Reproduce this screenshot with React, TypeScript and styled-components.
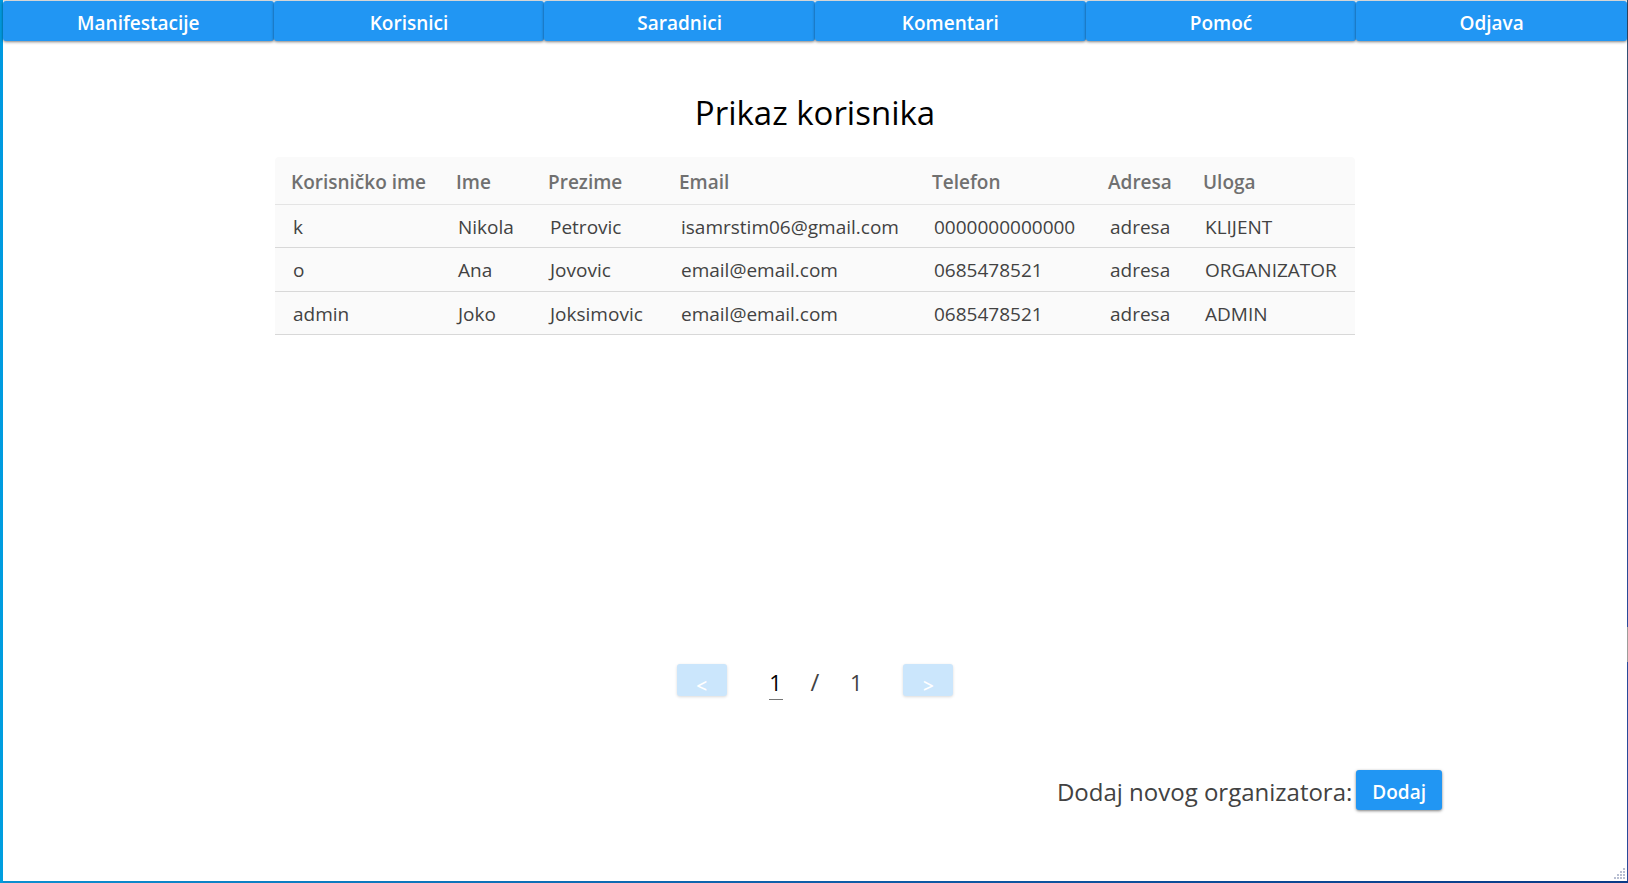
import React from "react";
import styled, { createGlobalStyle } from "styled-components";

const GlobalStyle = createGlobalStyle`
  *, *::before, *::after { box-sizing: border-box; }
  body { margin: 0; }
  body, button, input {
    font-family: "Segoe UI", "Open Sans", "Noto Sans", sans-serif;
  }
`;

const Desktop = styled.div`
  display: flex;
  min-height: 100vh;
  padding: 0 1px 2px 3px;
  background:
    linear-gradient(#0099e0, #009edf) left / 3px 100% no-repeat,
    linear-gradient(90deg, #0b8fd0, #0e5ea8 50%, #0a3a86) bottom / 100% 2px no-repeat,
    linear-gradient(#33506f 0, #2a4a9a 71%, #9c9c9c 71%, #9c9c9c 75%, #2a4a9a 75%) right / 1px 100% no-repeat;
`;

const Window = styled.div`
  position: relative;
  display: flex;
  flex: 1;
  flex-direction: column;
  min-width: 0;
  border-top: 1px solid #e6e6e6;
  background: #fff;
  color: #424242;
`;

const Nav = styled.nav`
  display: grid;
  grid-template-columns: repeat(6, 1fr);
`;

const RaisedButton = styled.button`
  height: 40px;
  padding: 4px 16px 0;
  border: 0;
  border-radius: 3px;
  background: #2196f3;
  box-shadow: 0 1px 3px rgba(0, 0, 0, 0.5);
  color: #fff;
  font-size: 19px;
  font-weight: 600;
  line-height: 24px;
`;

const PageButton = styled(RaisedButton)`
  width: 50px;
  height: 32px;
  padding: 12px 0 0;
  background: #cbe6fc;
  box-shadow: 0 1px 3px rgba(0, 0, 0, 0.15);
  line-height: 20px;
`;

const Main = styled.main`
  display: flex;
  flex: 1;
  flex-direction: column;
  align-items: center;
  padding-top: 48px;
`;

const Title = styled.h1`
  margin: 0;
  color: #000;
  font-size: 33px;
  font-weight: 400;
  line-height: 48px;
`;

const TableArea = styled.section`
  flex: 0 0 auto;
  min-height: 527px;
  padding-top: 20px;
`;

const Table = styled.table`
  width: 1080px;
  height: 178px;
  table-layout: fixed;
  border-collapse: separate;
  border-spacing: 0;
  border-radius: 4px 4px 0 0;
  background: #fafafa;
  font-size: 19px;
  line-height: 24px;
  text-align: left;
`;

const HeadCell = styled.th`
  height: 48px;
  padding: 2px 0 0 16px;
  border-bottom: 1px solid #e4e4e4;
  color: #707070;
  font-weight: 600;
  white-space: nowrap;
`;

const Cell = styled.td`
  padding: 2px 0 0 18px;
  border-bottom: 1px solid #d8d8d8;
  white-space: nowrap;
`;

const Pager = styled.div`
  display: flex;
  align-items: flex-start;
  font-size: 22px;
  line-height: 32px;
`;

const PageInput = styled.input`
  width: 14px;
  height: 36px;
  margin: 0 28px 0 42px;
  padding: 0;
  border: 0;
  border-bottom: 1px solid #757575;
  background: transparent;
  color: #000;
  font-size: 22px;
  line-height: 32px;
  text-align: center;
`;

const PageTotal = styled.span`
  width: 14px;
  margin: 2px 40px 0 30px;
  text-align: center;
`;

const Slash = styled.span`
  margin-top: 2px;
  font-size: 24px;
`;

const AddRow = styled.div`
  display: flex;
  align-self: flex-end;
  align-items: center;
  gap: 4px;
  margin: 70px 185px 70px 0;
`;

const AddLabel = styled.label`
  padding-top: 4px;
  font-size: 24px;
  line-height: 36px;
`;

const Grip = styled.svg`
  position: absolute;
  right: 2px;
  bottom: 2px;
`;

const navItems = ["Manifestacije", "Korisnici", "Saradnici", "Komentari", "Pomoć", "Odjava"];

const columns = [
  { name: "Korisničko ime", width: 165 },
  { name: "Ime", width: 92 },
  { name: "Prezime", width: 131 },
  { name: "Email", width: 253 },
  { name: "Telefon", width: 176 },
  { name: "Adresa", width: 95 },
  { name: "Uloga", width: 168 },
];

const users = [
  ["k", "Nikola", "Petrovic", "isamrstim06@gmail.com", "0000000000000", "adresa", "KLIJENT"],
  ["o", "Ana", "Jovovic", "email@email.com", "0685478521", "adresa", "ORGANIZATOR"],
  ["admin", "Joko", "Joksimovic", "email@email.com", "0685478521", "adresa", "ADMIN"],
];

const gripDots = [[9, 0], [6, 3], [9, 3], [3, 6], [6, 6], [9, 6], [0, 9], [3, 9], [6, 9], [9, 9]];

export default function App() {
  return (
    <Desktop>
      <GlobalStyle />
      <Window>
        <Nav>
          {navItems.map((item) => (
            <RaisedButton key={item} type="button">{item}</RaisedButton>
          ))}
        </Nav>
        <Main>
          <Title>Prikaz korisnika</Title>
          <TableArea>
            <Table>
              <colgroup>
                {columns.map((c) => <col key={c.name} width={c.width} />)}
              </colgroup>
              <thead>
                <tr>
                  {columns.map((c) => <HeadCell key={c.name} scope="col">{c.name}</HeadCell>)}
                </tr>
              </thead>
              <tbody>
                {users.map((user) => (
                  <tr key={user[0]}>
                    {user.map((value, i) => <Cell key={columns[i].name}>{value}</Cell>)}
                  </tr>
                ))}
              </tbody>
            </Table>
          </TableArea>
          <Pager>
            <PageButton type="button" disabled>&lt;</PageButton>
            <PageInput aria-label="Stranica" defaultValue="1" />
            <Slash>/</Slash>
            <PageTotal>1</PageTotal>
            <PageButton type="button" disabled>&gt;</PageButton>
          </Pager>
          <AddRow>
            <AddLabel htmlFor="add-organizer">Dodaj novog organizatora:</AddLabel>
            <RaisedButton id="add-organizer" type="button">Dodaj</RaisedButton>
          </AddRow>
        </Main>
        <Grip width="11" height="11" aria-hidden="true">
          {gripDots.map(([x, y]) => (
            <rect key={`${x}-${y}`} x={x} y={y} width="2" height="2" fill="#b8bfd2" />
          ))}
        </Grip>
      </Window>
    </Desktop>
  );
}
